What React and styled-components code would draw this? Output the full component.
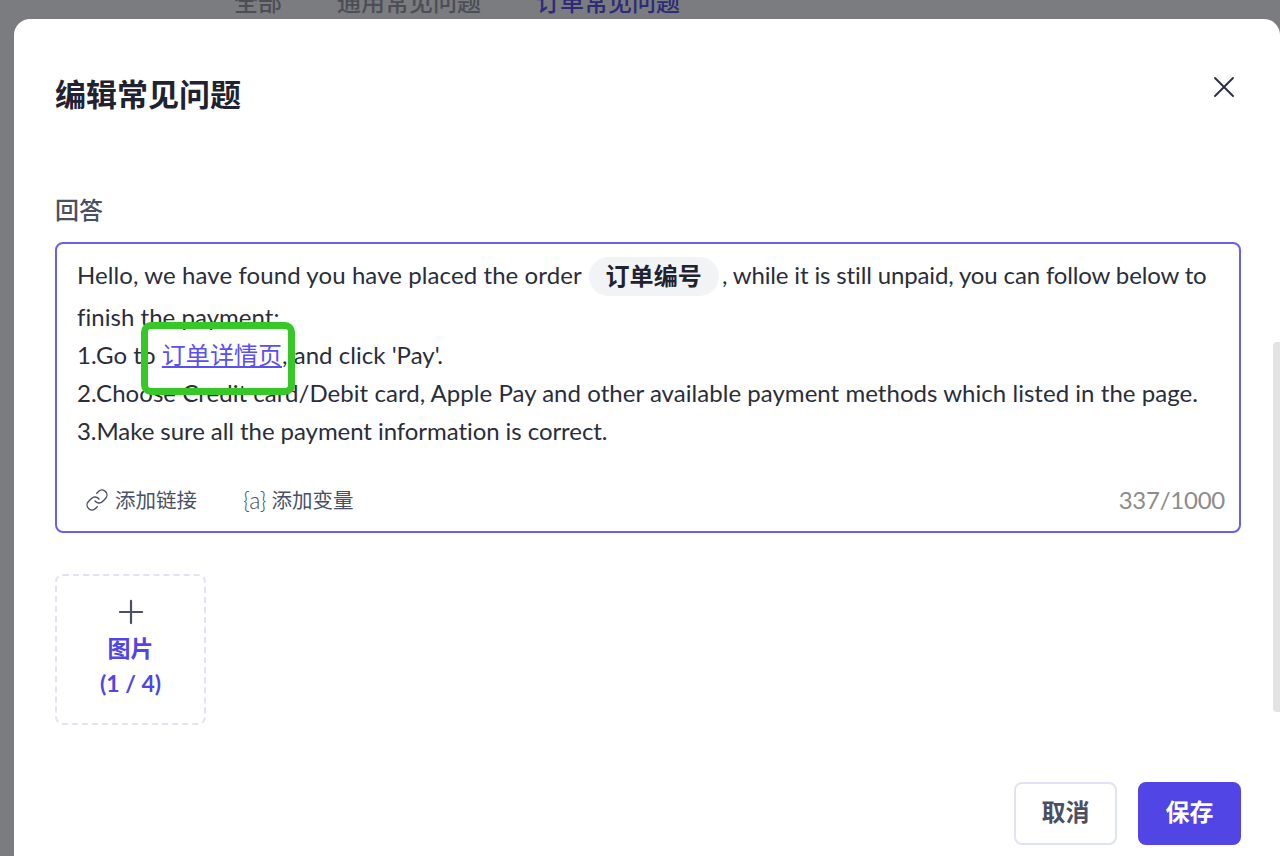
import React from "react";
import styled, { createGlobalStyle } from "styled-components";
import { Link, Plus, X } from "lucide-react";

const Global = createGlobalStyle`
  html, body { margin: 0; padding: 0; height: 856px; overflow: hidden; background: #7b7c80; }
  * { box-sizing: border-box; }
  body { font-family: "Lato", "Noto Sans CJK SC", sans-serif; }
`;
const Page = styled.div`
  width: 1280px; height: 856px; overflow: hidden; background: #7b7c80;
  display: flex; flex-direction: column;
`;
const TabBar = styled.div`
  height: 19px; flex: none; overflow: hidden; display: flex; align-items: flex-end;
  gap: 55px; padding-left: 234px; padding-bottom: 1px;
`;
const Tab = styled.span`
  font-size: 24px; line-height: 32px; flex: none; font-weight: 500;
  color: ${p => (p.$active ? "#2d2a78" : "#4b4e55")};
`;
const Modal = styled.div`
  position: relative; flex: 1; margin-left: 14px; background: #fff;
  border-radius: 16px 16px 0 0; padding: 0 39px 0 41px; overflow: hidden;
`;
const Header = styled.div`
  height: 155px; display: flex; justify-content: space-between; align-items: flex-start; padding-top: 53px;
`;
const Title = styled.h1`
  margin: 0; font-size: 31px; line-height: 44px; font-weight: 600; color: #1f2230;
`;
const CloseBtn = styled.button`
  border: 0; background: none; padding: 0; display: flex; color: #2b2d42; margin: -3px -1px 0 0; cursor: pointer;
`;
const Label = styled.div`
  font-size: 24px; line-height: 36px; color: #4a5064; font-weight: 500; height: 68px; padding-top: 18px;
`;
const Editor = styled.div`
  height: 291px; border: 2px solid #6a5ff0; border-radius: 8px; padding: 10px 14px 16px 20px;
  display: flex; flex-direction: column; justify-content: space-between;
`;
const Body = styled.div`
  font-size: 24px; color: #2a2d3a; line-height: 38px; letter-spacing: 0.04px;
`;
const FirstLine = styled.div` height: 44px; line-height: 42px; white-space: nowrap; letter-spacing: 0.09px; `;
const Tail = styled.span` letter-spacing: -0.14px; `;
const Line = styled.div`
  white-space: nowrap;
  letter-spacing: ${p => p.$track || "inherit"};
`;
const Chip = styled.span`
  display: inline-block; height: 39px; line-height: 37px; padding: 0 17px; margin: 0 3px 0 1px;
  background: #f2f3f5; border-radius: 20px; font-weight: 700; color: #1f2230; vertical-align: middle;
  position: relative; top: -1px;
`;
const Anchor = styled.a`
  color: #5a4ff0; text-decoration: underline;
`;
const Toolbar = styled.div` display: flex; align-items: center; justify-content: space-between; `;
const Tools = styled.div` display: flex; align-items: center; gap: 46px; padding-left: 8px; `;
const Tool = styled.span`
  display: inline-flex; align-items: center; gap: 6px; font-size: 20.5px; line-height: 30px; color: #4a5064;
`;
const VarGlyph = styled.span` font-size: 23px; font-weight: 300; margin-right: -1px; `;
const Counter = styled.span` font-size: 24px; line-height: 30px; color: #8c8c8c; letter-spacing: -0.25px; `;
const Upload = styled.div`
  width: 151px; height: 151px; margin-top: 41px; border: 2px dashed #e0e3f1; border-radius: 8px;
  display: flex; flex-direction: column; align-items: center; padding-top: 17px;
  color: #5145e5; font-weight: 700; font-size: 23px; line-height: 35px;
`;
const PlusIcon = styled(Plus)` color: #4a5064; flex: none; `;
const Footer = styled.div`
  display: flex; justify-content: flex-end; gap: 21px; margin-top: 57px;
`;
const Button = styled.button`
  width: 103px; height: 63px; border-radius: 8px; font: inherit; font-size: 24px; font-weight: 600;
  padding: 0 0 7px;
  border: 2px solid ${p => (p.$primary ? "#5145e5" : "#e0e3f3")};
  background: ${p => (p.$primary ? "#5145e5" : "#fff")};
  color: ${p => (p.$primary ? "#fff" : "#4a5064")};
`;
const Scrollbar = styled.div`
  position: absolute; right: 0; top: 323px; width: 7px; height: 370px; background: #e3e3e3; border-radius: 4px 0 0 4px;
`;
const Highlight = styled.div`
  position: absolute; left: 127px; top: 303px; width: 154px; height: 73px;
  border: 7px solid #35c826; border-radius: 10px; pointer-events: none;
`;

export default function App() {
  return (
    <Page>
      <Global />
      <TabBar>
        <Tab>全部</Tab>
        <Tab>通用常见问题</Tab>
        <Tab $active>订单常见问题</Tab>
      </TabBar>
      <Modal>
        <Header>
          <Title>编辑常见问题</Title>
          <CloseBtn aria-label="关闭"><X size={36} strokeWidth={1.25} /></CloseBtn>
        </Header>
        <Label>回答</Label>
        <Editor>
          <Body>
            <FirstLine>Hello, we have found you have placed the order <Chip>订单编号</Chip><Tail>, while it is still unpaid, you can follow below to</Tail></FirstLine>
            <Line>finish the payment:</Line>
            <Line>1.Go to <Anchor href="#">订单详情页</Anchor>, and click 'Pay'.</Line>
            <Line>2.Choose Credit card/Debit card, Apple Pay and other available payment methods which listed in the page.</Line>
            <Line $track="-0.06px">3.Make sure all the payment information is correct.</Line>
          </Body>
          <Toolbar>
            <Tools>
              <Tool><Link size={24} strokeWidth={1.4} />添加链接</Tool>
              <Tool><VarGlyph>{"{a}"}</VarGlyph>添加变量</Tool>
            </Tools>
            <Counter>337/1000</Counter>
          </Toolbar>
        </Editor>
        <Upload>
          <PlusIcon size={38} strokeWidth={1.4} />
          <span>图片</span>
          <span>(1 / 4)</span>
        </Upload>
        <Footer>
          <Button>取消</Button>
          <Button $primary>保存</Button>
        </Footer>
        <Scrollbar />
        <Highlight />
      </Modal>
    </Page>
  );
}
